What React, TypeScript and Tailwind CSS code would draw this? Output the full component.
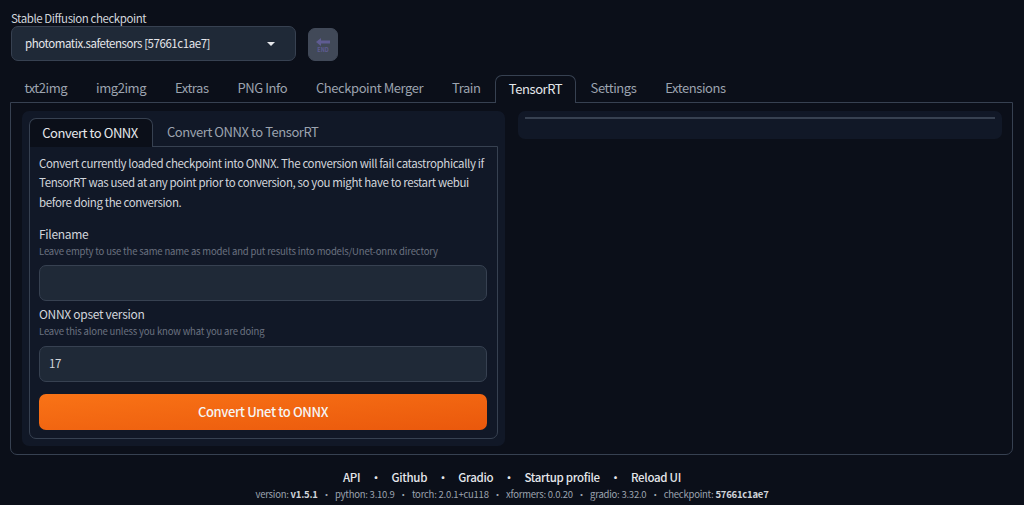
const font = "[font-family:'Noto_Sans_CJK_SC','Noto_Sans_CJK_JP',sans-serif]";

const mainTabs = ["txt2img", "img2img", "Extras", "PNG Info", "Checkpoint Merger", "Train", "TensorRT", "Settings", "Extensions"];
const links = ["API", "Github", "Gradio", "Startup profile", "Reload UI"];

function EndIcon() {
  return (
    <svg width="16" height="16" viewBox="0 0 16 16" fill="none">
      <path d="M1 5 L6 1 V3.5 H15 V6.5 H6 V9 Z" fill="#5f5c92" />
      <text x="8" y="15" textAnchor="middle" fontSize="5.5" fontWeight="700" fill="#5f5c92">END</text>
    </svg>
  );
}

function Field({ label, hint, value, gap }: { label: string; hint: string; value?: string; gap: string }) {
  return (
    <div>
      <p className="text-[12px] tracking-[-0.3px] leading-[18px] text-[#d1d5db]">{label}</p>
      <p className={`text-[9.5px] tracking-[-0.16px] leading-[14px] text-[#6b7280] mt-[1px] ${gap}`}>{hint}</p>
      <div className="h-[36px] rounded-[7px] border border-[#374151] bg-[#1f2937] px-[9px] flex items-center text-[11.5px] tracking-[-0.3px] text-[#d1d5db]">
        {value}
      </div>
    </div>
  );
}

export default function App() {
  return (
    <div className={`${font} w-[1024px] h-[505px] overflow-hidden bg-[#0b0f19] px-[10px] flex flex-col`}>
      {/* Checkpoint */}
      <div className="flex items-end gap-[12px] pt-[11px] pl-[1px]">
        <div className="w-[285px]">
          <p className="text-[11.5px] tracking-[-0.44px] leading-[15px] text-[#d1d5db]">Stable Diffusion checkpoint</p>
          <div className="h-[35px] rounded-[7px] border border-[#374151] bg-[#1f2937] pl-[13px] pr-[20px] flex items-center justify-between text-[11.5px] tracking-[-0.44px] text-[#e5e7eb]">
            <span>photomatix.safetensors [57661c1ae7]</span>
            <span className="w-0 h-0 border-x-[4px] border-x-transparent border-t-[4px] border-t-[#e5e7eb]" />
          </div>
        </div>
        <div className="w-[30px] h-[33px] rounded-[7px] bg-[#414958] border border-[#414958] flex items-center justify-center">
          <EndIcon />
        </div>
      </div>

      {/* Main tabs */}
      <div className="flex h-[27px] mt-[14px]">
        {mainTabs.map((t) => (
          <div
            key={t}
            className={
              t === "TensorRT"
                ? "relative z-10 h-[28px] px-[13px] pb-[2px] flex items-center text-[13px] tracking-[-0.43px] text-[#e5e7eb] bg-[#0b0f19] border border-b-0 border-[#374151] rounded-t-[7px]"
                : "h-[27px] px-[14.4px] pb-[2px] flex items-center text-[13px] tracking-[-0.43px] text-[#9ca3af]"
            }
          >
            {t}
          </div>
        ))}
      </div>

      {/* Tab panel */}
      <div className="h-[353px] w-[1003px] rounded-b-[7px] border border-[#374151] p-[8px] pl-[11px] flex gap-[13px]">
        <div className="w-[483px] h-[335px] rounded-[7px] bg-[#111827] p-[7px]">
          <div className="flex h-[28px]">
            <div className="relative z-10 h-[29px] w-[124px] pr-[2px] flex items-center justify-center text-[13px] tracking-[-0.44px] text-[#e5e7eb] bg-[#0b0f19] border border-b-0 border-[#374151] rounded-t-[7px]">
              Convert to ONNX
            </div>
            <div className="h-[28px] px-[14px] flex items-center text-[13px] tracking-[-0.44px] text-[#9ca3af]">Convert ONNX to TensorRT</div>
          </div>
          <div className="h-[293px] rounded-b-[7px] border border-[#374151] pl-[9px] pr-[10px] pt-[7px]">
            <p className="text-[11.5px] tracking-[-0.38px] leading-[19.3px] text-[#d1d5db]">
              Convert currently loaded checkpoint into ONNX. The conversion will fail catastrophically if TensorRT was used at any point prior to conversion, so you might have to restart webui before doing the conversion.
            </p>
            <div className="mt-[13px] flex flex-col gap-[4px]">
              <Field label="Filename" hint="Leave empty to use the same name as model and put results into models/Unet-onnx directory" gap="mb-[7px]" />
              <Field label="ONNX opset version" hint="Leave this alone unless you know what you are doing" value="17" gap="mb-[8px]" />
            </div>
            <div className="mt-[12px] h-[36px] rounded-[7px] bg-gradient-to-br from-[#f97316] to-[#ea580c] flex items-center justify-center text-[13px] tracking-[-0.38px] font-medium text-[#f5f5f4]">
              Convert Unet to ONNX
            </div>
          </div>
        </div>
        <div className="w-[484px] h-[28px] rounded-[7px] bg-[#111827] px-[7px] pt-[6px]">
          <div className="h-[2px] bg-[#374151]" />
        </div>
      </div>

      {/* Footer */}
      <div className="mt-[14px] flex justify-center items-center gap-[10px] text-[11.5px] tracking-[-0.3px] leading-[16px] font-medium text-[#e5e7eb]">
        {links.map((l, i) => (
          <span key={l} className="flex items-center gap-[10px]">
            {i > 0 && <span>•</span>}
            <span>{l}</span>
          </span>
        ))}
      </div>
      <div className="mt-[2px] flex justify-center gap-[4px] text-[9.5px] tracking-[-0.23px] leading-[15px] text-[#9ca3af]">
        <span>version: <b className="text-[#d1d5db]">v1.5.1</b></span>
        <span>•</span>
        <span>python: 3.10.9</span>
        <span>•</span>
        <span>torch: 2.0.1+cu118</span>
        <span>•</span>
        <span>xformers: 0.0.20</span>
        <span>•</span>
        <span>gradio: 3.32.0</span>
        <span>•</span>
        <span>checkpoint: <b className="text-[#d1d5db]">57661c1ae7</b></span>
      </div>
    </div>
  );
}
